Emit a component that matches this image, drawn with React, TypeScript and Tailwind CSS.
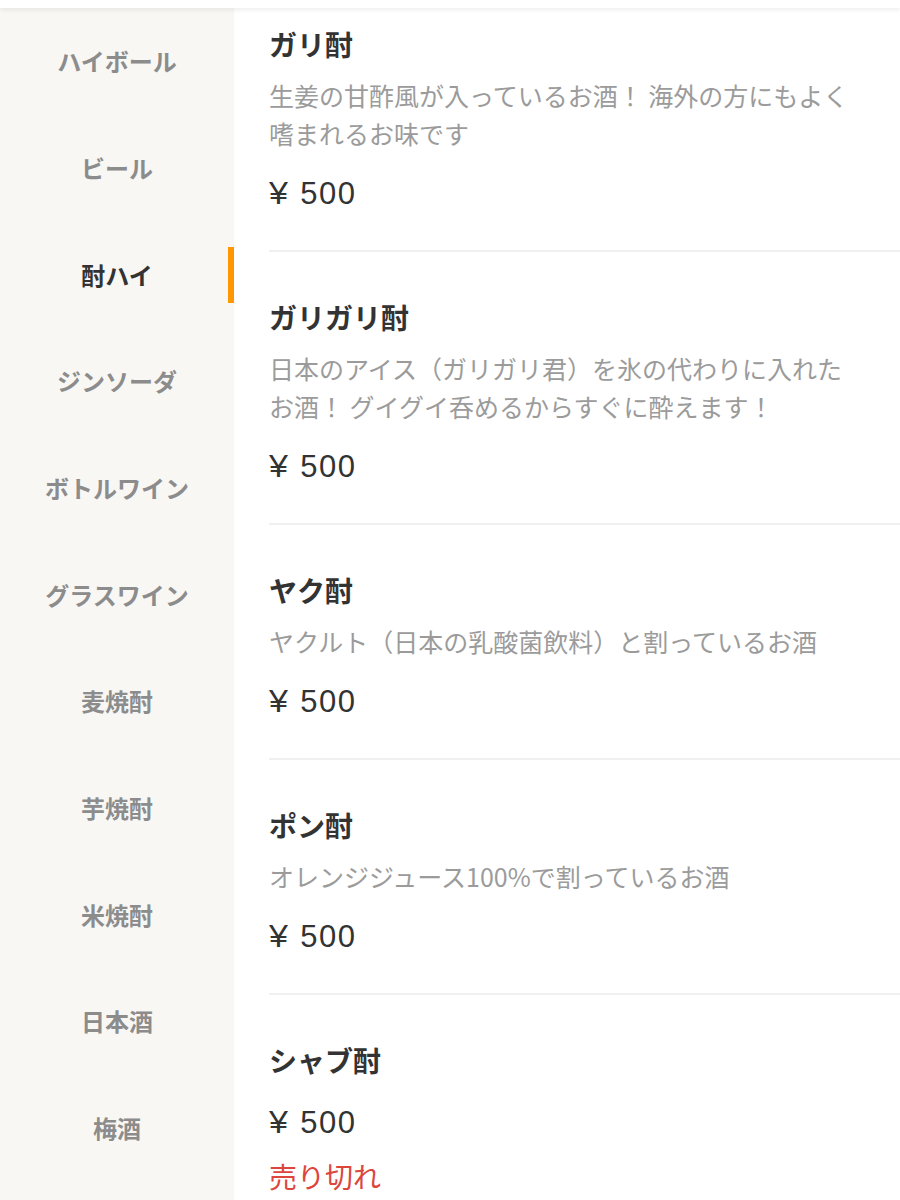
import React from "react";

const categories = [
  "ハイボール",
  "ビール",
  "酎ハイ",
  "ジンソーダ",
  "ボトルワイン",
  "グラスワイン",
  "麦焼酎",
  "芋焼酎",
  "米焼酎",
  "日本酒",
  "梅酒",
];

type Item = { name: string; desc?: string[]; price: string; soldOut?: boolean };

const items: Item[] = [
  {
    name: "ガリ酎",
    desc: ["生姜の甘酢風が入っているお酒！ 海外の方にもよく", "嗜まれるお味です"],
    price: "500",
  },
  {
    name: "ガリガリ酎",
    desc: ["日本のアイス（ガリガリ君）を氷の代わりに入れた", "お酒！ グイグイ呑めるからすぐに酔えます！"],
    price: "500",
  },
  {
    name: "ヤク酎",
    desc: ["ヤクルト（日本の乳酸菌飲料）と割っているお酒"],
    price: "500",
  },
  {
    name: "ポン酎",
    desc: ["オレンジジュース100%で割っているお酒"],
    price: "500",
  },
  { name: "シャブ酎", price: "500", soldOut: true },
];

const jp = { fontFamily: '"Noto Sans CJK JP", "Noto Sans", sans-serif' };
const priceFont = { fontFamily: '"Liberation Sans", "Noto Sans CJK JP", sans-serif' };

export default function App() {
  return (
    <div className="w-[900px] h-[1200px] overflow-hidden bg-white flex flex-col" style={jp}>
      <div className="h-[8px] bg-white shadow-[0_2px_5px_rgba(0,0,0,0.07)] relative z-10 shrink-0" />
      <div className="flex flex-1 min-h-0">
        <div className="w-[234px] shrink-0 bg-[#f8f7f4] flex flex-col">
          {categories.map((c, i) => {
            const active = i === 2;
            return (
              <div key={c} className="relative h-[106.67px] shrink-0 flex items-center justify-center">
                <span
                  className={`text-[24px] font-bold leading-none ${active ? "text-[#333333]" : "text-[#8c8c8c]"}`}
                >
                  {c}
                </span>
                {active && (
                  <div className="absolute right-0 top-1/2 -translate-y-1/2 w-[6px] h-[56px] bg-[#ff9800]" />
                )}
              </div>
            );
          })}
        </div>
        <div className="flex-1 pl-[35px] flex flex-col">
          {items.map((it, i) => (
            <div key={it.name} className="flex flex-col">
              {i > 0 && <div className="h-[2px] bg-[#f0f0f0]" />}
              <div className={`flex flex-col ${i === 0 ? "pt-[16px]" : "pt-[45px]"} pb-[36px]`}>
                <div className="text-[28px] font-bold leading-[40px] text-[#333333]">{it.name}</div>
                {it.desc && (
                  <div className="mt-[12px] text-[25px] leading-[38px] text-[#9b9b9b] whitespace-nowrap">
                    {it.desc.map((l) => (
                      <div key={l}>{l}</div>
                    ))}
                  </div>
                )}
                <div
                  className={`${it.desc ? "mt-[22px]" : "mt-[23px]"} flex items-baseline text-[31px] leading-[40px] text-[#333333]`}
                  style={priceFont}
                >
                  <span className="inline-block scale-x-110 origin-left">¥</span>
                  <span className="ml-[14px] tracking-[1.5px]">{it.price}</span>
                </div>
                {it.soldOut && (
                  <div className="mt-[13px] text-[28px] leading-[40px] text-[#dc463c]">売り切れ</div>
                )}
              </div>
            </div>
          ))}
        </div>
      </div>
    </div>
  );
}
